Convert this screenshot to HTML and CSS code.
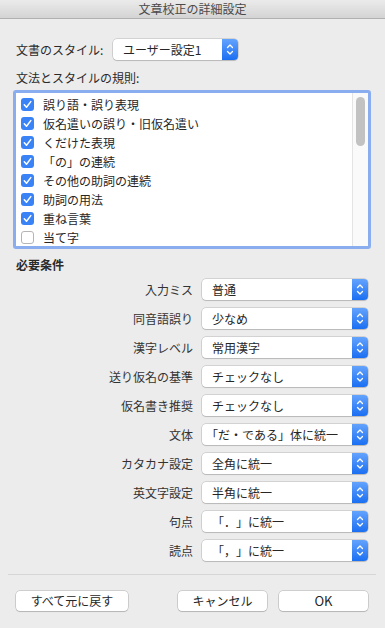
FILE: index.html
```html
<!DOCTYPE html>
<html lang="ja">
<head>
<meta charset="utf-8">
<link rel="stylesheet" href="styles.css">
</head>
<body>
<div class="window">
  <div class="titlebar">文章校正の詳細設定</div>
  <div class="content">
    <div class="style-row">
      <span class="label">文書のスタイル:</span>
      <div class="popup popup-style">
        <span class="popup-text">ユーザー設定1</span>
        <span class="popup-arrow"><svg width="16" height="21" viewBox="0 0 16 21"><path d="M5.5 8.5 L8 6 L10.5 8.5 M5.5 12.5 L8 15 L10.5 12.5" fill="none" stroke="#fff" stroke-width="1.3" stroke-linecap="round" stroke-linejoin="round"/></svg></span>
      </div>
    </div>
    <div class="section-label">文法とスタイルの規則:</div>
    <div class="listbox">
      <div class="items">
        <div class="item"><span class="cb on"><svg width="13" height="13" viewBox="0 0 13 13"><path d="M3.3 6.8 L5.5 9.2 L9.8 3.6" fill="none" stroke="#fff" stroke-width="1.5" stroke-linecap="round" stroke-linejoin="round"/></svg></span>誤り語・誤り表現</div>
        <div class="item"><span class="cb on"><svg width="13" height="13" viewBox="0 0 13 13"><path d="M3.3 6.8 L5.5 9.2 L9.8 3.6" fill="none" stroke="#fff" stroke-width="1.5" stroke-linecap="round" stroke-linejoin="round"/></svg></span>仮名遣いの誤り・旧仮名遣い</div>
        <div class="item"><span class="cb on"><svg width="13" height="13" viewBox="0 0 13 13"><path d="M3.3 6.8 L5.5 9.2 L9.8 3.6" fill="none" stroke="#fff" stroke-width="1.5" stroke-linecap="round" stroke-linejoin="round"/></svg></span>くだけた表現</div>
        <div class="item"><span class="cb on"><svg width="13" height="13" viewBox="0 0 13 13"><path d="M3.3 6.8 L5.5 9.2 L9.8 3.6" fill="none" stroke="#fff" stroke-width="1.5" stroke-linecap="round" stroke-linejoin="round"/></svg></span>「の」の連続</div>
        <div class="item"><span class="cb on"><svg width="13" height="13" viewBox="0 0 13 13"><path d="M3.3 6.8 L5.5 9.2 L9.8 3.6" fill="none" stroke="#fff" stroke-width="1.5" stroke-linecap="round" stroke-linejoin="round"/></svg></span>その他の助詞の連続</div>
        <div class="item"><span class="cb on"><svg width="13" height="13" viewBox="0 0 13 13"><path d="M3.3 6.8 L5.5 9.2 L9.8 3.6" fill="none" stroke="#fff" stroke-width="1.5" stroke-linecap="round" stroke-linejoin="round"/></svg></span>助詞の用法</div>
        <div class="item"><span class="cb on"><svg width="13" height="13" viewBox="0 0 13 13"><path d="M3.3 6.8 L5.5 9.2 L9.8 3.6" fill="none" stroke="#fff" stroke-width="1.5" stroke-linecap="round" stroke-linejoin="round"/></svg></span>重ね言葉</div>
        <div class="item"><span class="cb"></span>当て字</div>
      </div>
      <div class="scrolltrack"><div class="thumb"></div></div>
    </div>
    <div class="heading">必要条件</div>
    <div class="settings">
      <span class="slabel">入力ミス</span>
      <div class="popup"><span class="popup-text">普通</span><span class="popup-arrow"><svg width="16" height="21" viewBox="0 0 16 21"><path d="M5.5 8.5 L8 6 L10.5 8.5 M5.5 12.5 L8 15 L10.5 12.5" fill="none" stroke="#fff" stroke-width="1.3" stroke-linecap="round" stroke-linejoin="round"/></svg></span></div>
      <span class="slabel">同音語誤り</span>
      <div class="popup"><span class="popup-text">少なめ</span><span class="popup-arrow"><svg width="16" height="21" viewBox="0 0 16 21"><path d="M5.5 8.5 L8 6 L10.5 8.5 M5.5 12.5 L8 15 L10.5 12.5" fill="none" stroke="#fff" stroke-width="1.3" stroke-linecap="round" stroke-linejoin="round"/></svg></span></div>
      <span class="slabel">漢字レベル</span>
      <div class="popup"><span class="popup-text">常用漢字</span><span class="popup-arrow"><svg width="16" height="21" viewBox="0 0 16 21"><path d="M5.5 8.5 L8 6 L10.5 8.5 M5.5 12.5 L8 15 L10.5 12.5" fill="none" stroke="#fff" stroke-width="1.3" stroke-linecap="round" stroke-linejoin="round"/></svg></span></div>
      <span class="slabel">送り仮名の基準</span>
      <div class="popup"><span class="popup-text">チェックなし</span><span class="popup-arrow"><svg width="16" height="21" viewBox="0 0 16 21"><path d="M5.5 8.5 L8 6 L10.5 8.5 M5.5 12.5 L8 15 L10.5 12.5" fill="none" stroke="#fff" stroke-width="1.3" stroke-linecap="round" stroke-linejoin="round"/></svg></span></div>
      <span class="slabel">仮名書き推奨</span>
      <div class="popup"><span class="popup-text">チェックなし</span><span class="popup-arrow"><svg width="16" height="21" viewBox="0 0 16 21"><path d="M5.5 8.5 L8 6 L10.5 8.5 M5.5 12.5 L8 15 L10.5 12.5" fill="none" stroke="#fff" stroke-width="1.3" stroke-linecap="round" stroke-linejoin="round"/></svg></span></div>
      <span class="slabel">文体</span>
      <div class="popup"><span class="popup-text tight">「だ・である」体に統一</span><span class="popup-arrow"><svg width="16" height="21" viewBox="0 0 16 21"><path d="M5.5 8.5 L8 6 L10.5 8.5 M5.5 12.5 L8 15 L10.5 12.5" fill="none" stroke="#fff" stroke-width="1.3" stroke-linecap="round" stroke-linejoin="round"/></svg></span></div>
      <span class="slabel">カタカナ設定</span>
      <div class="popup"><span class="popup-text">全角に統一</span><span class="popup-arrow"><svg width="16" height="21" viewBox="0 0 16 21"><path d="M5.5 8.5 L8 6 L10.5 8.5 M5.5 12.5 L8 15 L10.5 12.5" fill="none" stroke="#fff" stroke-width="1.3" stroke-linecap="round" stroke-linejoin="round"/></svg></span></div>
      <span class="slabel">英文字設定</span>
      <div class="popup"><span class="popup-text">半角に統一</span><span class="popup-arrow"><svg width="16" height="21" viewBox="0 0 16 21"><path d="M5.5 8.5 L8 6 L10.5 8.5 M5.5 12.5 L8 15 L10.5 12.5" fill="none" stroke="#fff" stroke-width="1.3" stroke-linecap="round" stroke-linejoin="round"/></svg></span></div>
      <span class="slabel">句点</span>
      <div class="popup"><span class="popup-text">「．」に統一</span><span class="popup-arrow"><svg width="16" height="21" viewBox="0 0 16 21"><path d="M5.5 8.5 L8 6 L10.5 8.5 M5.5 12.5 L8 15 L10.5 12.5" fill="none" stroke="#fff" stroke-width="1.3" stroke-linecap="round" stroke-linejoin="round"/></svg></span></div>
      <span class="slabel">読点</span>
      <div class="popup"><span class="popup-text">「，」に統一</span><span class="popup-arrow"><svg width="16" height="21" viewBox="0 0 16 21"><path d="M5.5 8.5 L8 6 L10.5 8.5 M5.5 12.5 L8 15 L10.5 12.5" fill="none" stroke="#fff" stroke-width="1.3" stroke-linecap="round" stroke-linejoin="round"/></svg></span></div>
    </div>
    <div class="separator"></div>
    <div class="buttons">
      <button class="btn btn-reset">すべて元に戻す</button>
      <button class="btn btn-cancel">キャンセル</button>
      <button class="btn btn-ok">OK</button>
    </div>
  </div>
</div>
</body>
</html>
```

FILE: styles.css
```css
* { box-sizing: border-box; }
html, body {
  margin: 0;
  padding: 0;
}
body {
  width: 385px;
  height: 628px;
  background: #ececec;
  font-family: "Noto Sans CJK JP", "Liberation Sans", sans-serif;
  font-size: 12px;
  color: #2a2a2a;
  overflow: hidden;
  text-spacing-trim: space-all;
  font-feature-settings: normal;
}
.window {
  display: flex;
  flex-direction: column;
  height: 628px;
}
.titlebar {
  height: 19px;
  line-height: 18px;
  text-align: center;
  color: #4a4a4a;
  background: linear-gradient(#ebebeb, #d4d4d4);
  border-bottom: 1px solid #b1b1b1;
}
.content {
  display: flex;
  flex-direction: column;
  padding-top: 20px;
}
.style-row {
  display: flex;
  align-items: center;
  padding-left: 16px;
  height: 21px;
}
.style-row .label {
  width: 97px;
}
.popup {
  display: flex;
  height: 21px;
  background: #fff;
  border-radius: 4px;
  box-shadow: 0 0 0 0.5px rgba(0, 0, 0, 0.22), 0 1px 1px rgba(0, 0, 0, 0.12);
  overflow: hidden;
}
.popup-style {
  width: 125px;
}
.popup-text {
  flex: 1;
  min-width: 0;
  padding-left: 10px;
  line-height: 21px;
  white-space: nowrap;
  overflow: hidden;
  color: #262626;
}
.popup-text.tight {
  padding-left: 4px;
}
.popup-arrow {
  width: 16px;
  flex: none;
  background: linear-gradient(#63a3fd, #1b6ff2);
  display: flex;
}
.section-label {
  padding-left: 16px;
  margin-top: 9px;
  line-height: 18px;
}
.listbox {
  margin: 3px 14px 0 13px;
  height: 159px;
  border: 3px solid #8aadef;
  border-radius: 3px;
  background: #fff;
  display: flex;
  overflow: hidden;
}
.items {
  flex: 1;
  padding-top: 2px;
  overflow: hidden;
}
.item {
  display: flex;
  align-items: center;
  height: 19px;
  padding-left: 5px;
  white-space: nowrap;
  color: #262626;
}
.cb {
  width: 13px;
  height: 13px;
  margin-right: 9px;
  border-radius: 3px;
  border: 1px solid #b5b5b5;
  background: #fff;
  flex: none;
  display: flex;
}
.cb.on {
  border: none;
  background: #3a83f6;
}
.scrolltrack {
  width: 16px;
  flex: none;
  background: #fafafa;
  border-left: 1px solid #e4e4e4;
  padding: 4px 3px 0 3px;
}
.thumb {
  width: 9px;
  height: 49px;
  background: #c2c2c2;
  border-radius: 5px;
}
.heading {
  font-weight: bold;
  padding-left: 16px;
  margin-top: 7px;
  line-height: 18px;
}
.settings {
  display: grid;
  grid-template-columns: 177px 166px;
  column-gap: 9px;
  row-gap: 8px;
  padding-left: 16px;
  margin-top: 5px;
  align-items: center;
}
.slabel {
  text-align: right;
  color: #333;
  white-space: nowrap;
}
.separator {
  height: 1px;
  background: #d6d6d6;
  margin: 13px 9px 0 8px;
}
.buttons {
  display: flex;
  padding: 0 17px 0 16px;
  margin-top: 16px;
}
.btn {
  height: 20px;
  padding: 0;
  font-family: inherit;
  font-size: 12px;
  color: #262626;
  background: #fff;
  border: none;
  border-radius: 4px;
  box-shadow: 0 0 0 0.5px rgba(0, 0, 0, 0.25), 0 1px 1px rgba(0, 0, 0, 0.12);
  line-height: 20px;
}
.btn-reset { width: 112px; }
.btn-cancel { width: 89px; margin-left: 50px; }
.btn-ok { width: 89px; margin-left: 12px; font-size: 13px; }
```
